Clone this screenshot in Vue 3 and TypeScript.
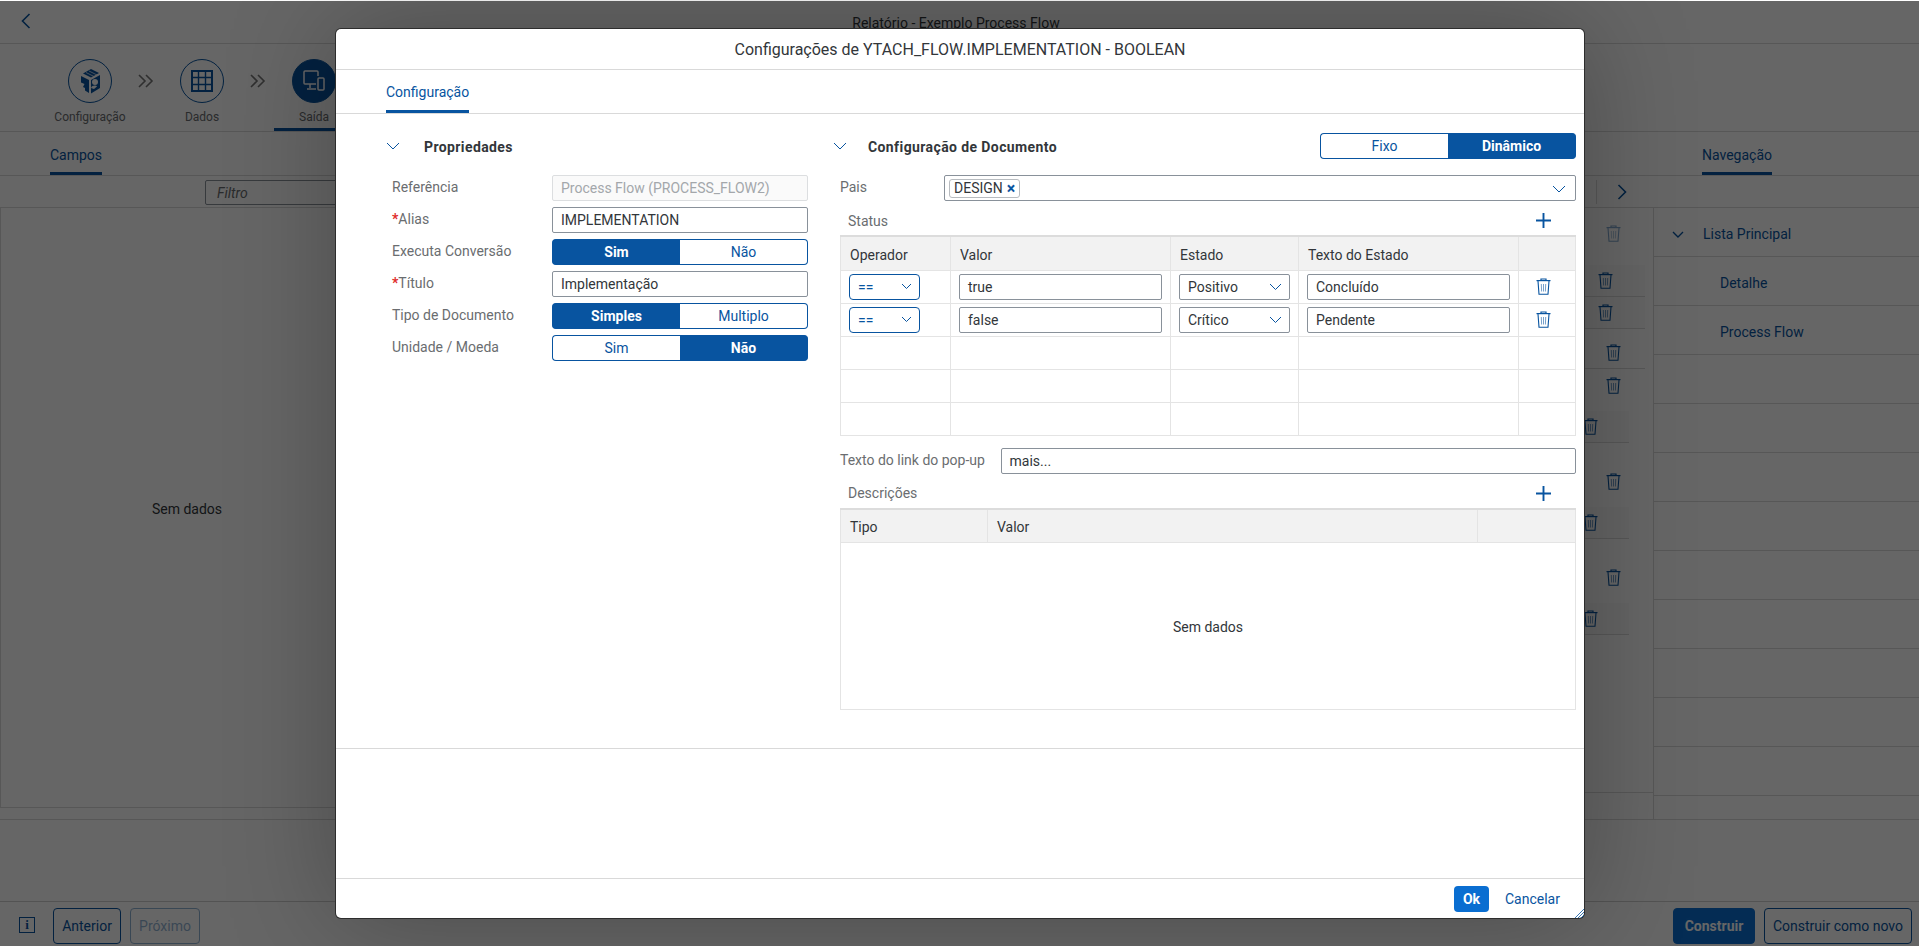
<script setup lang="ts">
interface TrashRow { gap: number; right: number; tint: boolean; line: boolean; dim?: boolean; pad: number }
const trashRows: TrashRow[] = [
  { gap: 9, right: 8, tint: false, line: false, dim: true, pad: 24 },
  { gap: 16, right: 8, tint: true, line: true, pad: 32 },
  { gap: 0, right: 8, tint: true, line: true, pad: 32 },
  { gap: 8, right: 8, tint: false, line: true, pad: 24 },
  { gap: 0, right: 8, tint: false, line: false, pad: 24 },
  { gap: 10, right: 24, tint: true, line: true, pad: 31 },
  { gap: 22, right: 8, tint: false, line: false, pad: 24 },
  { gap: 10, right: 24, tint: true, line: true, pad: 31 },
  { gap: 22, right: 8, tint: false, line: false, pad: 24 },
  { gap: 10, right: 24, tint: true, line: true, pad: 31 },
]
const navItems = ['Lista Principal', 'Detalhe', 'Process Flow', '', '', '', '', '', '', '', '', '']
const formRows = [
  { label: 'Referência', req: false, kind: 'disabled', value: 'Process Flow (PROCESS_FLOW2)' },
  { label: 'Alias', req: true, kind: 'input', value: 'IMPLEMENTATION' },
  { label: 'Executa Conversão', req: false, kind: 'seg', a: 'Sim', b: 'Não', on: 0 },
  { label: 'Título', req: true, kind: 'input', value: 'Implementação' },
  { label: 'Tipo de Documento', req: false, kind: 'seg', a: 'Simples', b: 'Multiplo', on: 0 },
  { label: 'Unidade / Moeda', req: false, kind: 'seg', a: 'Sim', b: 'Não', on: 1 },
]
const statusRows = [
  { valor: 'true', estado: 'Positivo', texto: 'Concluído' },
  { valor: 'false', estado: 'Crítico', texto: 'Pendente' },
  null, null, null,
]
</script>

<template>
  <div class="page">
    <header class="top">
      <svg class="back" width="10" height="16" viewBox="0 0 10 16"><path d="M8.5 1 1.5 8l7 7" fill="none" stroke="#0854a0" stroke-width="1.6" /></svg>
      <span class="top-title">Relatório - Exemplo Process Flow</span>
    </header>

    <nav class="wizard">
      <div class="step">
        <span class="circle">
          <svg width="24" height="26" viewBox="0 0 24 26" fill="#0854a0">
            <path d="M5 5.5 13 1l8 4-8 4.5z" />
            <path d="M8 4.5l8 4M11 3l8 4" stroke="#fff" stroke-width=".7" />
            <path d="M3 8l8 4v13l-4-2.5V20l-2-1 1.5-3L3 14.500z" />
            <path d="M13 12l9-5v13l-9 5.500z" />
            <circle cx="17" cy="14" r="3" fill="#fff" />
            <path d="M13 20c1-3 5-3 6-1.500l-3 2.500z" fill="#fff" />
          </svg>
        </span>
        <span class="step-label">Configuração</span>
      </div>
      <svg class="dbl" width="16" height="14" viewBox="0 0 16 14"><path d="M1 1l6 6-6 6M8 1l6 6-6 6" fill="none" stroke="#777" stroke-width="1.6" /></svg>
      <div class="step">
        <span class="circle">
          <svg width="22" height="22" viewBox="0 0 22 22" fill="none" stroke="#0854a0"><rect x="1" y="1" width="20" height="20" stroke-width="2" /><path d="M7.500 1v20M14.500 1v20M1 7.500h20M1 14.500h20" stroke-width="1.400" /></svg>
        </span>
        <span class="step-label">Dados</span>
      </div>
      <svg class="dbl" width="16" height="14" viewBox="0 0 16 14"><path d="M1 1l6 6-6 6M8 1l6 6-6 6" fill="none" stroke="#777" stroke-width="1.6" /></svg>
      <div class="step active">
        <span class="circle solid">
          <svg width="24" height="24" viewBox="0 0 24 24" fill="none" stroke="#fff" stroke-width="1.500"><path d="M14 15H3a1 1 0 0 1-1-1V3a1 1 0 0 1 1-1h12a1 1 0 0 1 1 1v4" /><path d="M8 15v4M5 20h9" /><rect x="16" y="9" width="6" height="12" rx="1" /></svg>
        </span>
        <span class="step-label">Saída</span>
      </div>
    </nav>

    <div class="tabs">
      <span class="bg-tab first">Campos</span>
      <span class="bg-tab second">Navegação</span>
    </div>

    <div class="filter-row">
      <span class="filter">Filtro</span>
      <span class="filter-end">
        <svg width="10" height="16" viewBox="0 0 10 16"><path d="M1.500 1l7 7-7 7" fill="none" stroke="#0854a0" stroke-width="1.600" /></svg>
      </span>
    </div>

    <div class="body">
      <section class="left-panel">Sem dados</section>
      <section class="mid-panel">
        <div class="rows">
          <div
            v-for="(r, i) in trashRows"
            :key="i"
            class="t-row"
            :class="{ tint: r.tint, line: r.line, dim: r.dim }"
            :style="{ marginTop: r.gap + 'px', marginRight: r.right + 'px', paddingRight: r.pad + 'px' }"
          >
            <svg class="trash" width="15" height="17" viewBox="0 0 15 17" fill="none" stroke="#0854a0">
              <path d="M.5 2.600h14" stroke-width="1.200" />
              <path d="M5 2V1h5v1" stroke-width="1.200" />
              <path d="M2 3l1 13.300h9L13 3" stroke-width="1.100" />
              <path d="M5.300 6l.3 7.500M7.500 6v7.500M9.700 6l-.3 7.500" stroke-width="1" opacity=".55" />
            </svg>
          </div>
        </div>
      </section>
      <aside class="nav-panel">
        <div v-for="(n, i) in navItems" :key="i" class="nav-row" :class="{ sub: i > 0 }">
          <svg v-if="i === 0" class="nav-chev" width="12" height="8" viewBox="0 0 12 8"><path d="M1 1l5 5 5-5" fill="none" stroke="#0854a0" stroke-width="1.400" /></svg>
          {{ n }}
        </div>
      </aside>
    </div>

    <div class="spacer"></div>

    <footer class="foot">
      <span class="info">i</span>
      <button class="ghost prev">Anterior</button>
      <button class="ghost off">Próximo</button>
      <span class="grow"></span>
      <button class="primary">Construir</button>
      <button class="ghost new">Construir como novo</button>
    </footer>

    <div class="overlay"></div>

    <div class="dialog">
      <div class="d-head">Configurações de YTACH_FLOW.IMPLEMENTATION - BOOLEAN</div>
      <div class="d-tabs"><span class="d-tab">Configuração</span></div>

      <div class="d-body">
        <div class="col-left">
          <div class="sec-head">
            <svg class="chev" width="14" height="8" viewBox="0 0 14 8"><path d="M1 1l6 6 6-6" fill="none" stroke="#0854a0" /></svg>
            <span class="sec-title">Propriedades</span>
          </div>
          <div class="form">
            <template v-for="f in formRows" :key="f.label">
              <label class="f-label"><b v-if="f.req" class="req">*</b>{{ f.label }}</label>
              <div v-if="f.kind === 'seg'" class="seg">
                <span class="seg-item" :class="{ on: f.on === 0 }">{{ f.a }}</span>
                <span class="seg-item" :class="{ on: f.on === 1 }">{{ f.b }}</span>
              </div>
              <div v-else class="field" :class="{ disabled: f.kind === 'disabled' }">{{ f.value }}</div>
            </template>
          </div>
        </div>

        <div class="col-right">
          <div class="sec-head between">
            <span class="sec-start">
              <svg class="chev" width="14" height="8" viewBox="0 0 14 8"><path d="M1 1l6 6 6-6" fill="none" stroke="#0854a0" /></svg>
              <span class="sec-title">Configuração de Documento</span>
            </span>
            <div class="seg wide">
              <span class="seg-item">Fixo</span>
              <span class="seg-item on">Dinâmico</span>
            </div>
          </div>

          <div class="inner">
            <div class="line-row pais">
              <label class="f-label w104">Pais</label>
              <div class="field multi">
                <span class="token">DESIGN <i class="x">×</i></span>
                <svg class="caret" width="14" height="8" viewBox="0 0 14 8"><path d="M1 1l6 6 6-6" fill="none" stroke="#0854a0" /></svg>
              </div>
            </div>

            <div class="tbl-title">
              <span>Status</span>
              <svg width="15" height="15" viewBox="0 0 15 15"><path d="M7.500 0v15M0 7.500h15" stroke="#0854a0" stroke-width="1.900" /></svg>
            </div>

            <table class="tbl status">
              <thead>
                <tr><th>Operador</th><th>Valor</th><th>Estado</th><th>Texto do Estado</th><th></th></tr>
              </thead>
              <tbody>
                <tr v-for="(s, i) in statusRows" :key="i">
                  <template v-if="s">
                    <td>
                      <div class="field sel blue small">==
                        <svg width="11" height="7" viewBox="0 0 11 7"><path d="M1 1l4.500 4.500L10 1" fill="none" stroke="#0854a0" /></svg>
                      </div>
                    </td>
                    <td><div class="field">{{ s.valor }}</div></td>
                    <td>
                      <div class="field sel">{{ s.estado }}
                        <svg width="13" height="8" viewBox="0 0 13 8"><path d="M1 1l5.500 5.500L12 1" fill="none" stroke="#0854a0" /></svg>
                      </div>
                    </td>
                    <td><div class="field">{{ s.texto }}</div></td>
                    <td class="c">
                      <svg class="trash" width="15" height="17" viewBox="0 0 15 17" fill="none" stroke="#0854a0">
                        <path d="M.5 2.600h14" stroke-width="1.200" />
                        <path d="M5 2V1h5v1" stroke-width="1.200" />
                        <path d="M2 3l1 13.300h9L13 3" stroke-width="1.100" />
                        <path d="M5.300 6l.3 7.500M7.500 6v7.500M9.700 6l-.3 7.500" stroke-width="1" opacity=".55" />
                      </svg>
                    </td>
                  </template>
                  <template v-else><td></td><td></td><td></td><td></td><td></td></template>
                </tr>
              </tbody>
            </table>

            <div class="line-row link">
              <label class="f-label w160">Texto do link do pop-up</label>
              <div class="field grow">mais...</div>
            </div>

            <div class="tbl-title low">
              <span>Descrições</span>
              <svg width="15" height="15" viewBox="0 0 15 15"><path d="M7.500 0v15M0 7.500h15" stroke="#0854a0" stroke-width="1.900" /></svg>
            </div>

            <table class="tbl desc">
              <thead><tr><th>Tipo</th><th>Valor</th><th></th></tr></thead>
              <tbody><tr><td colspan="3" class="empty">Sem dados</td></tr></tbody>
            </table>
          </div>
        </div>
      </div>

      <div class="d-blank"></div>

      <div class="d-foot">
        <button class="ok">Ok</button>
        <button class="cancel">Cancelar</button>
        <svg class="grip" width="9" height="9" viewBox="0 0 9 9"><path d="M0 9l9-9M3 9l6-6M6 9l3-3" stroke="#0854a0" stroke-width=".8" /></svg>
      </div>
    </div>
  </div>
</template>

<style>
html, body { margin: 0; padding: 0; height: 100%; overflow: hidden; }
</style>

<style scoped>
.page {
  position: relative;
  height: 100vh;
  overflow: hidden;
  display: flex;
  flex-direction: column;
  background: #fff;
  color: #32363a;
  font: 14px/18px Roboto, "Liberation Sans", sans-serif;
}
button { font: inherit; letter-spacing: inherit; cursor: pointer; }
.top {
  height: 44px;
  flex: none;
  box-sizing: border-box;
  border-bottom: 1px solid #d9d9d9;
  display: flex;
  align-items: center;
  padding: 0 0 0 21px;
}
.back { flex: none; margin-top: -2px; }
.top-title { flex: 1; text-align: center; padding-right: 38px; margin-top: 3px; font-size: 14px; }
.wizard {
  height: 88px;
  flex: none;
  box-sizing: border-box;
  border-bottom: 1px solid #d9d9d9;
  padding-left: 44px;
  display: flex;
  align-items: flex-start;
}
.step {
  width: 92px;
  height: 87px;
  box-sizing: border-box;
  padding-top: 15px;
  display: flex;
  flex-direction: column;
  align-items: center;
  position: relative;
}
.step.active::after {
  content: "";
  position: absolute;
  left: 6px; right: 6px; bottom: 0;
  height: 3px;
  background: #0854a0;
}
.circle {
  width: 42px;
  height: 42px;
  border: 1px solid #0854a0;
  border-radius: 50%;
  display: flex;
  align-items: center;
  justify-content: center;
}
.circle.solid { background: #0854a0; }
.step-label { margin-top: 5px; color: #6a6d70; font-size: 12px; white-space: nowrap; }
.dbl { width: 20px; margin-top: 30px; flex: none; }
.tabs {
  height: 44px;
  flex: none;
  box-sizing: border-box;
  border-bottom: 1px solid #d9d9d9;
  display: flex;
  justify-content: space-between;
}
.bg-tab {
  height: 43px;
  line-height: 46px;
  box-sizing: border-box;
  border-bottom: 3px solid #0854a0;
  color: #0854a0;
}
.bg-tab.first { margin-left: 50px; }
.bg-tab.second { margin-right: 147px; }
.filter-row {
  height: 32px;
  flex: none;
  box-sizing: border-box;
  border-bottom: 1px solid #d9d9d9;
  display: flex;
  align-items: center;
  padding-left: 205px;
}
.filter {
  width: 300px;
  height: 25px;
  margin-top: 2px;
  box-sizing: border-box;
  border: 1px solid #89919a;
  border-radius: 2px;
  padding: 3px 11px;
  font-style: italic;
  color: #6a6d70;
}
.filter-end {
  margin-left: auto;
  width: 323px;
  height: 24px;
  box-sizing: border-box;
  border-left: 1px solid #d9d9d9;
  padding-left: 20px;
  display: flex;
  align-items: center;
}
.body { flex: none; display: flex; border-bottom: 1px solid #d9d9d9; box-sizing: border-box; height: 612px; }
.left-panel {
  width: 374px;
  height: 600px;
  flex: none;
  box-sizing: border-box;
  border: 1px solid #d9d9d9;
  border-top: none;
  padding-top: 2px;
  display: flex;
  align-items: center;
  justify-content: center;
  color: #32363a;
}
.mid-panel { flex: 1; min-width: 0; }
.rows {
  height: 576px;
  box-sizing: border-box;
  border-bottom: 1px solid #d9d9d9;
}
.t-row {
  height: 32px;
  box-sizing: border-box;
  display: flex;
  align-items: center;
  justify-content: flex-end;
}
.t-row.tint { background: #fbfbfb; }
.t-row.line { border-bottom: 1px solid #d9d9d9; }
.t-row.dim .trash { opacity: .5; }
.nav-panel {
  width: 266px;
  flex: none;
  box-sizing: border-box;
  border-left: 1px solid #d9d9d9;
  overflow: hidden;
}
.nav-row {
  height: 49px;
  box-sizing: border-box;
  border-bottom: 1px solid #d9d9d9;
  display: flex;
  align-items: center;
  padding: 4px 0 0 49px;
  color: #0854a0;
  position: relative;
}
.nav-row.sub { padding-left: 66px; }
.nav-chev { position: absolute; left: 18px; top: 23px; }
.spacer { flex: 1; }
.foot {
  height: 45px;
  flex: none;
  box-sizing: border-box;
  border-top: 1px solid #d0d0d0;
  padding: 5px 7px 2px 19px;
  display: flex;
  align-items: center;
  gap: 9px;
}
.info {
  width: 14px;
  height: 14px;
  box-sizing: content-box;
  border: 1px solid #0854a0;
  color: #0854a0;
  font: bold 13px/14px "Liberation Serif", serif;
  text-align: center;
  margin-right: 9px;
  margin-top: -1px;
}
.ghost {
  width: 70px;
  height: 36px;
  padding: 0;
  border: 1px solid #0854a0;
  border-radius: 4px;
  background: #fff;
  color: #0854a0;
}
.ghost.prev { width: 68px; }
.ghost.off { opacity: .45; }
.ghost.new { width: 148px; }
.grow { flex: 1; }
.primary {
  width: 82px;
  height: 36px;
  border: 1px solid #0a6ed1;
  border-radius: 4px;
  background: #0a6ed1;
  color: #fff;
  font-weight: 700;
}
.overlay {
  position: absolute;
  inset: 1px 0 0 0;
  background: rgba(0, 0, 0, .6);
}
.dialog {
  position: absolute;
  left: 336px;
  top: 29px;
  width: 1248px;
  height: 889px;
  box-sizing: border-box;
  background: #fff;
  border-radius: 5px;
  box-shadow: 0 0 0 1px #2d2d2d, 0 0 110px rgba(0, 0, 0, .28);
  display: flex;
  flex-direction: column;
}
.d-head {
  height: 41px;
  flex: none;
  box-sizing: border-box;
  border-bottom: 1px solid #d9d9d9;
  text-align: center;
  line-height: 41px;
  font-size: 16px;
}
.d-tabs {
  height: 44px;
  flex: none;
  box-sizing: border-box;
  border-bottom: 1px solid #d9d9d9;
  padding-left: 50px;
}
.d-tab {
  display: inline-block;
  height: 43px;
  box-sizing: border-box;
  line-height: 44px;
  color: #0854a0;
  border-bottom: 3px solid #0854a0;
}
.d-body {
  height: 635px;
  flex: none;
  box-sizing: border-box;
  border-bottom: 1px solid #d9d9d9;
  padding: 19px 8px 0 50px;
  display: flex;
  gap: 25px;
}
.col-left { width: 422px; flex: none; }
.col-right { flex: 1; min-width: 0; }
.sec-head { height: 26px; display: flex; align-items: center; }
.sec-head.between { justify-content: space-between; }
.sec-start { display: flex; align-items: center; }
.chev { flex: none; margin-right: 24px; }
.col-right .chev { margin-right: 21px; }
.sec-title { font-weight: 700; color: #32363a; letter-spacing: .4px; padding-top: 2px; }
.form {
  margin-top: 16px;
  padding-left: 6px;
  display: grid;
  grid-template-columns: 160px 1fr;
  grid-auto-rows: 26px;
  row-gap: 6px;
}
.f-label { color: #6a6d70; line-height: 24px; white-space: nowrap; }
.req { color: #e02b2b; font-weight: 700; }
.field {
  height: 26px;
  box-sizing: border-box;
  border: 1px solid #89919a;
  border-radius: 2px;
  padding: 0 8px;
  line-height: 24px;
  background: #fff;
  white-space: nowrap;
}
.field.disabled { border-color: #dcdee0; background: #fafafa; color: #a3a7ab; }
.seg {
  height: 26px;
  display: flex;
}
.seg.wide { width: 256px; }
.seg-item {
  flex: 1;
  box-sizing: border-box;
  text-align: center;
  line-height: 24px;
  border: 1px solid #0854a0;
  color: #0854a0;
  background: #fff;
}
.seg-item:first-child { border-radius: 4px 0 0 4px; border-right: none; }
.seg-item:last-child { border-radius: 0 4px 4px 0; border-left: none; }
.seg-item.on { background: #0854a0; color: #fff; font-weight: 700; }
.inner { padding-left: 7px; }
.line-row { display: flex; }
.pais { margin-top: 16px; }
.w104 { width: 104px; flex: none; }
.w160 { width: 160.500px; flex: none; }
.link { margin-top: 12px; }
.multi { flex: 1; position: relative; padding: 0 4px; }
.token {
  display: inline-flex;
  align-items: center;
  gap: 4px;
  height: 19px;
  margin-top: 2.500px;
  box-sizing: border-box;
  border: 1px solid #b8bcc0;
  border-radius: 3px;
  padding: 0 4px;
  line-height: 17px;
  vertical-align: top;
}
.x { color: #0854a0; font-style: normal; font-size: 16px; font-weight: 700; }
.caret { position: absolute; right: 9px; top: 9px; }
.tbl-title {
  height: 34px;
  box-sizing: border-box;
  display: flex;
  align-items: center;
  justify-content: space-between;
  padding: 5px 25px 0 8px;
  color: #6a6d70;
}
.tbl-title.low { padding-top: 5px; }
.tbl {
  width: 736px;
  border-collapse: collapse;
  table-layout: fixed;
  border: 1px solid #e4e4e4;
  border-top: 2px solid #dcdcdc;
}
.tbl th {
  height: 34px;
  box-sizing: border-box;
  background: #f2f2f2;
  border: 1px solid #e4e4e4;
  border-top: none;
  padding: 3px 8px 0 9px;
  text-align: left;
  font-weight: 400;
}
.tbl td {
  height: 33px;
  box-sizing: border-box;
  border: 1px solid #e4e4e4;
  padding: 0 8px;
}
.status th:nth-child(1) { width: 110px; }
.status th:nth-child(2) { width: 220px; }
.status th:nth-child(3) { width: 128px; }
.status th:nth-child(4) { width: 220px; }
.sel { display: flex; align-items: center; justify-content: space-between; padding-right: 7px; }
.blue { border-color: #0854a0; border-radius: 4px; color: #0854a0; width: 71px; }
.tbl td.c { padding: 0 16px 0 8px; }
.trash { display: block; margin: 0 auto; flex: none; }
.t-row .trash { margin: 0; }
.desc th:nth-child(1) { width: 147px; }
.desc th:nth-child(3) { width: 98px; }
.empty { text-align: center; }
.tbl td.empty { height: 167px; padding-top: 2px; }
.d-blank { flex: 1; }
.d-foot {
  height: 40px;
  flex: none;
  box-sizing: border-box;
  border-top: 1px solid #d9d9d9;
  padding: 0 16px 0 0;
  display: flex;
  align-items: center;
  justify-content: flex-end;
  gap: 8px;
  position: relative;
}
.ok {
  width: 35px;
  height: 26px;
  border: none;
  border-radius: 4px;
  background: #0a6ed1;
  color: #fff;
  font-weight: 700;
  padding: 0;
}
.cancel {
  width: 71px;
  height: 26px;
  border: none;
  background: none;
  color: #0854a0;
  padding: 0;
}
.grip { position: absolute; right: 0; bottom: 0; }
</style>
